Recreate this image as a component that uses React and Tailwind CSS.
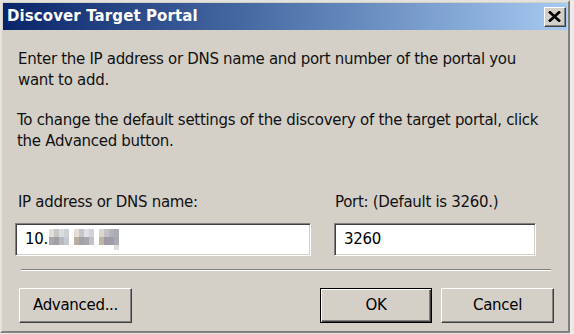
import React from "react";

const font = { fontFamily: '"DejaVu Sans", Verdana, sans-serif' };

function Blur() {
  const g1 = [
    ["#e2ded8", "#c9c7c6", "#d9dde2", "#cfd0d4"],
    ["#a9a9ad", "#9fa0a6", "#b7b8bc", "#c4c9d0"],
  ];
  const g2 = [
    ["#e4ded6", "#c6c4c4", "#dfe1e6", "#d2d3d8"],
    ["#b8aea2", "#a2a1a8", "#a8a7ad", "#c0c2c8"],
  ];
  const g3 = [
    ["#dcd6cc", "#c3c1c4", "#b4b1b8", "#a9adb4"],
    ["#beb4a8", "#a09aa6", "#9d9ea8", "#a7aab2"],
  ];
  const Group = ({ g }) => (
    <span className="inline-grid grid-cols-[repeat(4,5px)] grid-rows-[8px_8px]">
      {g.flat().map((c, i) => (
        <span key={i} style={{ background: c }} />
      ))}
    </span>
  );
  return (
    <span className="inline-flex items-start ml-[1px] gap-[5px]">
      <Group g={g1} />
      <Group g={g2} />
      <span className="flex flex-col">
        <Group g={g3} />
        <span className="ml-[15px] w-[5px] h-[5px] bg-[#dcdcdc]" />
      </span>
    </span>
  );
}

function Button({ children, def }) {
  if (def) {
    return (
      <div className="w-[112px] h-[35px] border border-black bg-[#d4d0c8] shadow-[inset_1px_1px_#ffffff,inset_-1px_-1px_#404040,inset_-2px_-2px_#808080] flex items-center justify-center text-[15px] tracking-[-0.3px] text-black">
        {children}
      </div>
    );
  }
  return (
    <div className="w-[113px] h-[35px] border border-t-white border-l-white border-r-[#404040] border-b-[#404040] bg-[#d4d0c8] shadow-[inset_-1px_-1px_#808080] flex items-center justify-center text-[15px] tracking-[-0.3px] text-black">
      {children}
    </div>
  );
}

function Input({ w, children }) {
  return (
    <div
      className="h-[33px] bg-white border border-t-[#808080] border-l-[#808080] border-r-white border-b-white shadow-[inset_1px_1px_#404040,inset_-1px_-1px_#d4d0c8] flex items-center pl-[9px] text-[15px] tracking-[-0.3px] text-black"
      style={{ width: w }}
    >
      {children}
    </div>
  );
}

export default function App() {
  return (
    <div className="w-[574px] h-[334px] bg-[#ecebe9] overflow-hidden" style={font}>
      <div className="w-[570px] h-[333px] bg-[#d4d0c8] border-2 border-t-[#e4e2dd] border-l-[#e4e2dd] border-r-[#808080] border-b-[#808080] p-[1px] flex flex-col">
        <div className="h-[27px] bg-linear-to-r from-[#0a246a] to-[#a6caf0] flex items-center pl-[4px] pr-[1px]">
          <span className="text-white font-bold text-[15px] tracking-[0.1px] flex-1">
            Discover Target Portal
          </span>
          <div className="w-[22px] h-[20px] bg-[#d4d0c8] border border-t-white border-l-white border-r-[#404040] border-b-[#404040] shadow-[inset_-1px_-1px_#808080] flex items-start justify-start pl-[3px] pt-[3px]">
            <svg width="13" height="11" viewBox="0 0 13 11">
              <path d="M1 0.5 L12 10.5 M12 0.5 L1 10.5" stroke="#000" strokeWidth="2.7" />
            </svg>
          </div>
        </div>
        <div className="flex-1 px-[12px] text-[15px] tracking-[-0.3px] leading-[21px] text-[#111]">
          <p className="mt-[19px] ml-[3px]">
            Enter the IP address or DNS name and port number of the portal you
            <br />
            want to add.
          </p>
          <p className="mt-[19px] ml-[2px]">
            To change the default settings of the discovery of the target portal, click
            <br />
            the Advanced button.
          </p>
          <div className="mt-[40px] flex gap-[23px]">
            <div className="flex flex-col">
              <span className="ml-[3px]">IP address or DNS name:</span>
              <div className="mt-[10px]">
                <Input w={296}>
                  <span>10.</span>
                  <Blur />
                </Input>
              </div>
            </div>
            <div className="flex flex-col">
              <span className="ml-[1px]">Port: (Default is 3260.)</span>
              <div className="mt-[10px]">
                <Input w={202}>3260</Input>
              </div>
            </div>
          </div>
          <div className="mt-[13px] ml-[6px] w-[530px] h-[2px] border-t border-t-[#808080] border-b border-b-white" />
          <div className="mt-[17px] flex ml-[4px]">
            <Button>Advanced...</Button>
            <div className="ml-auto mr-[1px] flex gap-[9px]">
              <Button def>OK</Button>
              <Button>Cancel</Button>
            </div>
          </div>
        </div>
      </div>
    </div>
  );
}
